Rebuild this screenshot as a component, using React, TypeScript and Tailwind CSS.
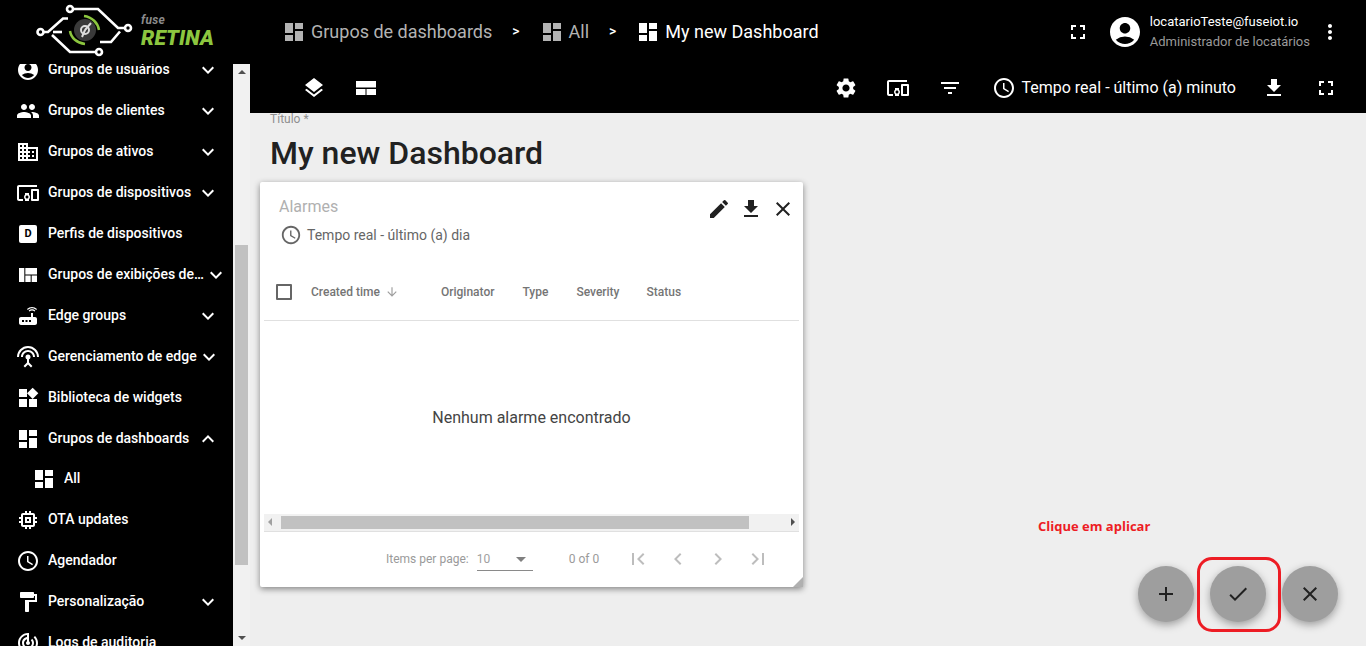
import React from "react";
import {
  MdAccountCircle, MdPeople, MdDomain, MdDevicesOther, MdViewQuilt, MdRouter, MdSettingsInputAntenna,
  MdWidgets, MdDashboard, MdMemory, MdAccessTime, MdFormatPaint, MdTrackChanges, MdKeyboardArrowDown,
  MdKeyboardArrowUp, MdLayers, MdSettings, MdFilterList, MdFileDownload, MdFullscreen, MdMoreVert, MdEdit,
  MdClose, MdCheck, MdAdd, MdFirstPage, MdLastPage, MdChevronLeft, MdChevronRight, MdArrowDownward, MdArrowDropDown,
} from "react-icons/md";

const DBox = () => (
  <span className="flex h-[18px] w-[18px] items-center justify-center rounded-[2px] bg-white text-[11px] font-bold leading-none text-black">D</span>
);

type Item = { label: string; icon: React.ReactNode; arrow?: "down" | "up"; sub?: boolean; shift?: boolean };
const items: Item[] = [
  { label: "Grupos de usuários", icon: <MdAccountCircle size={24} />, arrow: "down" },
  { label: "Grupos de clientes", icon: <MdPeople size={24} />, arrow: "down" },
  { label: "Grupos de ativos", icon: <MdDomain size={24} />, arrow: "down" },
  { label: "Grupos de dispositivos", icon: <MdDevicesOther size={24} />, arrow: "down" },
  { label: "Perfis de dispositivos", icon: <DBox /> },
  { label: "Grupos de exibições de dispositivos", icon: <MdViewQuilt size={24} />, arrow: "down", shift: true },
  { label: "Edge groups", icon: <MdRouter size={24} />, arrow: "down" },
  { label: "Gerenciamento de edge", icon: <MdSettingsInputAntenna size={24} />, arrow: "down" },
  { label: "Biblioteca de widgets", icon: <MdWidgets size={24} /> },
  { label: "Grupos de dashboards", icon: <MdDashboard size={24} />, arrow: "up" },
  { label: "All", icon: <MdDashboard size={24} />, sub: true },
  { label: "OTA updates", icon: <MdMemory size={24} /> },
  { label: "Agendador", icon: <MdAccessTime size={24} /> },
  { label: "Personalização", icon: <MdFormatPaint size={24} />, arrow: "down" },
  { label: "Logs de auditoria", icon: <MdTrackChanges size={24} /> },
];

const Logo = () => (
  <div className="flex h-16 shrink-0 items-start bg-black">
    <svg width="135" height="58" viewBox="0 0 135 58" className="shrink-0">
      <g fill="none" stroke="#fff" strokeWidth="2.6">
        <path d="M44 32H48L63 18.500H68" />
        <path d="M53 32H62" />
        <path d="M52 35L70 52H96" />
        <path d="M73 9H98L118 28H125" />
        <path d="M120 31.500L111 42H100" />
        <circle cx="40.500" cy="32" r="3" />
        <circle cx="70" cy="9" r="3" />
        <circle cx="128" cy="28" r="3" />
        <circle cx="99" cy="52" r="3" />
      </g>
      <circle cx="85" cy="30" r="11" fill="#3a3a3a" />
      <circle cx="85" cy="30" r="4" fill="none" stroke="#ddd" strokeWidth="2" />
      <path d="M85 30L91 23M85 30L82 37" stroke="#ddd" strokeWidth="2" />
      <path d="M84 16C92 17 98 23 99 30" fill="none" stroke="#8cc63f" strokeWidth="2.500" />
      <path d="M70 31C71 38 77 43 85 44" fill="none" stroke="#8cc63f" strokeWidth="2.500" />
    </svg>
    <div className="ml-[6px] flex flex-col pt-[15px] font-['Roboto',sans-serif] italic">
      <span className="h-[11px] text-[12px] font-bold leading-[11px] tracking-[0.3px] text-[#8a8a8a]">fuse</span>
      <span className="text-[21px] font-black leading-[24px] tracking-[0.1px] text-[#8cc63f]">RETINA</span>
    </div>
  </div>
);

const SideRow = ({ item }: { item: Item }) => (
  <div className={`flex h-[41px] items-center text-white ${item.sub ? "-mt-[1px] pl-[32px]" : "pl-[16px]"}`}>
    <span className="flex w-6 shrink-0 items-center justify-center">{item.icon}</span>
    <span className={`ml-2 truncate text-[14px] font-medium ${item.shift ? "w-[157px]" : item.label === "Gerenciamento de edge" ? "w-[150px]" : "w-[149px]"}`}>
      {item.label}
    </span>
    {item.arrow === "down" && <MdKeyboardArrowDown size={24} className="-ml-[1px] shrink-0" />}
    {item.arrow === "up" && <MdKeyboardArrowUp size={24} className="-ml-[1px] shrink-0" />}
  </div>
);

const Sidebar = () => (
  <aside className="flex h-full w-[250px] shrink-0 flex-col bg-black">
    <Logo />
    <div className="flex min-h-0 flex-1">
      <div className="h-full w-[233px] shrink-0 overflow-hidden">
        <div className="-mt-[15px]">
          {items.map((i) => <SideRow key={i.label} item={i} />)}
        </div>
      </div>
      <div className="flex h-full w-[17px] shrink-0 flex-col items-center bg-[#f1f1f1]">
        <div className="mt-[6px] h-0 w-0 border-x-[4px] border-b-[4px] border-x-transparent border-b-[#505050]" />
        <div className="mt-[171px] h-[320px] w-[13px] bg-[#c1c1c1]" />
        <div className="mt-[71px] h-0 w-0 border-x-[4px] border-t-[4px] border-x-transparent border-t-[#505050]" />
      </div>
    </div>
  </aside>
);

const WebIcon = () => (
  <svg width="24" height="24" viewBox="0 0 24 24" fill="#fff">
    <path d="M2 5h20v6.500H2zM2 13h9.500v6H2zM12.500 13H22v6h-9.500z" />
  </svg>
);

const TopBar = () => (
  <header className="h-[113px] shrink-0 bg-black text-white">
    <div className="flex h-[63px] items-center pl-[32px] pr-[24px]">
      <MdDashboard size={24} className="text-[#b3b3b3]" />
      <span className="ml-[5px] text-[18px] text-[#b3b3b3]">Grupos de dashboards</span>
      <span className="ml-[20px] text-[14px] font-medium">&gt;</span>
      <MdDashboard size={24} className="ml-[20px] text-[#b3b3b3]" />
      <span className="ml-[5px] text-[18px] text-[#b3b3b3]">All</span>
      <span className="ml-[20px] text-[14px] font-medium">&gt;</span>
      <MdDashboard size={24} className="ml-[20px]" />
      <span className="ml-[5px] text-[18px]">My new Dashboard</span>
      <div className="ml-auto flex items-center">
        <MdFullscreen size={24} />
        <MdAccountCircle size={36} className="ml-[17px]" />
        <div className="ml-[7px] flex flex-col leading-[20px]">
          <span className="text-[13px]">locatarioTeste@fuseiot.io</span>
          <span className="text-[13px] text-[#9a9a9a]">Administrador de locatários</span>
        </div>
        <MdMoreVert size={24} className="ml-[8px]" />
      </div>
    </div>
    <div className="flex h-[50px] items-center pl-[52px] pr-[28px]">
      <MdLayers size={24} />
      <span className="ml-[28px]"><WebIcon /></span>
      <div className="ml-auto flex items-center">
        <MdSettings size={24} />
        <MdDevicesOther size={24} className="ml-[28px]" />
        <MdFilterList size={24} className="ml-[28px]" />
        <MdAccessTime size={24} className="ml-[30px]" />
        <span className="ml-[5px] text-[16px]">Tempo real - último (a) minuto</span>
        <MdFileDownload size={24} className="ml-[26px]" />
        <MdFullscreen size={24} className="ml-[28px]" />
      </div>
    </div>
  </header>
);

const Th = ({ children, className }: { children: React.ReactNode; className: string }) => (
  <span className={`text-[12px] font-medium text-[#757575] ${className}`}>{children}</span>
);

const Card = () => (
  <section className="relative ml-[10px] flex h-[405px] w-[543px] flex-col rounded-[2px] bg-white px-[4px] shadow-[0_2px_6px_rgba(0,0,0,0.45)]">
    <div className="flex h-[41px] items-end pl-[15px] pr-[4px]">
      <span className="pb-[3px] text-[16px] text-[#b0b0b0]">Alarmes</span>
      <div className="ml-auto flex items-center gap-[8px] self-end pb-[1px] text-[#212121]">
        <MdEdit size={24} />
        <MdFileDownload size={24} />
        <MdClose size={24} />
      </div>
    </div>
    <div className="flex h-[28px] items-center pl-[16px] text-[14px] text-[#666]">
      <MdAccessTime size={22} />
      <span className="ml-[5px]">Tempo real - último (a) dia</span>
    </div>
    <div className="mt-[14px] flex h-[60px] items-center border-b border-[#e0e0e0] pl-[12px]">
      <span className="h-[16px] w-[16px] rounded-[1px] border-2 border-[#666]" />
      <Th className="ml-[19px]">Created time</Th>
      <MdArrowDownward size={14} className="ml-[5px] text-[#9e9e9e]" />
      <Th className="ml-[42px]">Originator</Th>
      <Th className="ml-[28px]">Type</Th>
      <Th className="ml-[28px]">Severity</Th>
      <Th className="ml-[27px]">Status</Th>
    </div>
    <div className="flex h-[198px] items-center justify-center pb-[0px] text-[16px] text-[#444]">Nenhum alarme encontrado</div>
    <div className="flex h-[18px] items-center border-b border-[#e0e0e0] bg-[#f1f1f1]">
      <span className="ml-[4px] h-0 w-0 border-y-[4px] border-r-[4px] border-y-transparent border-r-[#a0a0a0]" />
      <span className="ml-[9px] h-[13px] w-[468px] bg-[#c1c1c1]" />
      <span className="ml-auto mr-[4px] h-0 w-0 border-y-[4px] border-l-[4px] border-y-transparent border-l-[#505050]" />
    </div>
    <div className="flex h-[57px] items-center pl-[122px] text-[12px] text-[#9a9a9a]">
      <span>Items per page:</span>
      <span className="ml-[8px] flex h-[24px] w-[56px] items-center justify-between border-b border-[#8a8a8a] pt-[1px] text-[#a0a0a0]">
        10
        <MdArrowDropDown size={24} className="text-[#808080]" />
      </span>
      <span className="ml-[36px]">0 of 0</span>
      <span className="ml-[27px] flex gap-[16px] text-[#bdbdbd]">
        <MdFirstPage size={24} />
        <MdChevronLeft size={24} />
        <MdChevronRight size={24} />
        <MdLastPage size={24} />
      </span>
    </div>
    <span className="absolute bottom-0 right-0 h-0 w-0 border-b-[10px] border-l-[10px] border-b-[#b0b0b0] border-l-transparent" />
  </section>
);

const Fab = ({ children }: { children: React.ReactNode }) => (
  <button className="flex h-[56px] w-[56px] items-center justify-center rounded-full bg-[#9e9e9e] text-[#212121] shadow-[0_3px_8px_rgba(0,0,0,0.35)]">
    {children}
  </button>
);

const Main = () => (
  <main className="relative flex min-w-0 flex-1 flex-col bg-[#eeeeee]">
    <TopBar />
    <div className="min-h-0 flex-1 overflow-hidden">
      <div className="ml-[20px] mt-[-1px] h-[14px] text-[12px] leading-[14px] text-[#8f8f8f]">Título *</div>
      <h1 className="ml-[20px] mt-[4px] h-[52px] text-[32px] font-medium leading-[46px] text-[#212121]">My new Dashboard</h1>
      <Card />
    </div>
    <span className="absolute left-[788px] top-[518px] font-['Open_Sans',sans-serif] text-[13px] font-bold leading-[16px] text-[#ed1c24]">Clique em aplicar</span>
    <div className="absolute left-[888px] top-[566px] flex gap-[16px]">
      <Fab><MdAdd size={24} /></Fab>
      <Fab><MdCheck size={24} /></Fab>
      <Fab><MdClose size={24} /></Fab>
    </div>
    <span className="absolute left-[947px] top-[557px] h-[75px] w-[84px] rounded-[15px] border-[3px] border-[#ed1c24]" />
  </main>
);

export default function App() {
  return (
    <div className="flex h-[646px] w-[1366px] overflow-hidden font-['Roboto',sans-serif]">
      <Sidebar />
      <Main />
    </div>
  );
}
